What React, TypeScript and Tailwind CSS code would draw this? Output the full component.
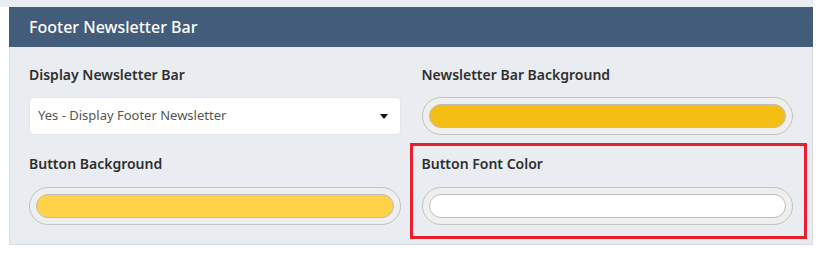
import React from "react";

function ColorPill({ color }: { color: string }) {
  return (
    <div className="h-[38px] rounded-full border border-[#c3c3c3] bg-[#efefef] p-[6px]">
      <div className="h-full w-full rounded-full border border-[#bdbdbd]" style={{ backgroundColor: color }} />
    </div>
  );
}

function Label({ children }: { children: React.ReactNode }) {
  return <div className="h-[20px] text-[14px] font-semibold leading-[20px] text-[#2f2f2f]">{children}</div>;
}

export default function App() {
  return (
    <div className="h-[254px] w-[825px] bg-white font-['Noto_Sans',sans-serif]">
      <div className="h-[7px] w-[813px] bg-[#e9ecf1]" />
      <div className="relative ml-[9px] w-[804px]">
        <div className="flex h-[40px] items-center bg-[#425c79] px-[20px] text-[16px] font-medium text-white">
          Footer Newsletter Bar
        </div>
        <div className="grid h-[198px] grid-cols-2 content-start gap-x-[21px] border border-t-0 border-[#d9dce1] bg-[#e9ecf1] px-[19px] pt-[18px]">
          <div>
            <Label>Display Newsletter Bar</Label>
            <div className="mt-[12px] flex h-[38px] items-center justify-between rounded-[5px] border border-[#e2e5ea] bg-white pl-[8px] pr-[12px] text-[13px] text-[#555]">
              <span>Yes - Display Footer Newsletter</span>
              <svg width="8" height="5" viewBox="0 0 8 5">
                <path d="M0 0 L8 0 L4 5 Z" fill="#111" />
              </svg>
            </div>
          </div>
          <div>
            <Label>Newsletter Bar Background</Label>
            <div className="mt-[12px]">
              <ColorPill color="#f5be15" />
            </div>
          </div>
          <div className="mt-[19px]">
            <Label>Button Background</Label>
            <div className="mt-[13px]">
              <ColorPill color="#ffd24a" />
            </div>
          </div>
          <div className="mt-[19px]">
            <Label>Button Font Color</Label>
            <div className="mt-[13px]">
              <ColorPill color="#ffffff" />
            </div>
          </div>
        </div>
        <div className="absolute left-[401px] top-[136px] h-[96px] w-[397px] border-[3px] border-[#e8202a]" />
      </div>
    </div>
  );
}
